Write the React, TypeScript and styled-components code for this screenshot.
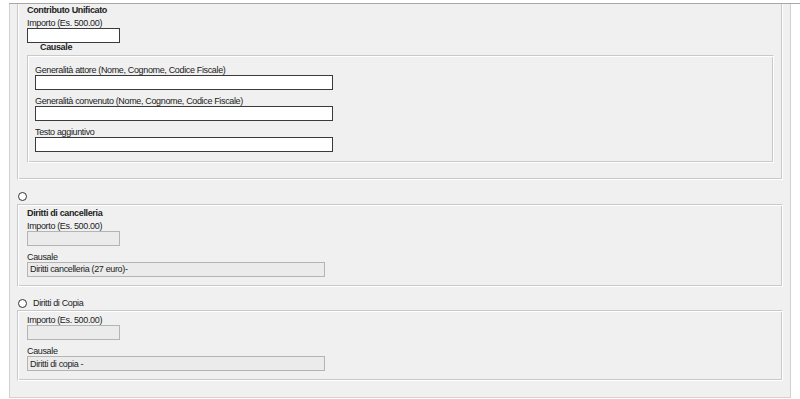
import React from 'react';
import styled, { createGlobalStyle } from 'styled-components';

const GlobalStyle = createGlobalStyle`
  html, body {
    margin: 0;
    padding: 0;
    background: #ffffff;
  }
  body {
    font-family: "Liberation Sans", Arial, sans-serif;
    font-size: 9px;
    letter-spacing: -0.35px;
    color: #222;
  }
`;

const Page = styled.div`
  width: 800px;
  height: 399px;
  overflow: hidden;
`;

const TopRule = styled.div`
  height: 3px;
  margin-left: 9px;
  border-bottom: 1px solid #a8a8a8;
`;

const Panel = styled.div`
  margin-left: 9px;
  width: 782px;
  box-sizing: border-box;
  background: #f0f0f0;
  border: 1px solid #d2d2d2;
  border-top: none;
  padding: 0 7px 16px 7px;
  display: flex;
  flex-direction: column;
`;

const Section = styled.fieldset<{ $open?: boolean; $pt?: number }>`
  margin: 0;
  min-width: 0;
  padding: ${(p) => (p.$open ? 0 : p.$pt ?? 2)}px 8px 9px 9px;
  border: 1px solid;
  border-color: #c9c9c9 #ffffff #ffffff #c9c9c9;
  box-shadow: ${(p) =>
    p.$open
      ? 'inset 1px 0 0 #fff, inset -1px -1px 0 #c9c9c9'
      : 'inset 1px 1px 0 #fff, inset -1px -1px 0 #c9c9c9'};
  ${(p) => p.$open && 'border-top: none;'}
`;

const Group = styled.fieldset`
  margin: 4px 0 7px 0;
  min-width: 0;
  padding: 9px 7px 10px 7px;
  border: 1px solid;
  border-color: #c9c9c9 #ffffff #ffffff #c9c9c9;
  box-shadow: inset 1px 1px 0 #fff, inset -1px -1px 0 #c9c9c9;
`;

const Title = styled.div`
  font-weight: bold;
  line-height: 13px;
  margin-bottom: 1px;
`;

const GroupCaption = styled.div`
  font-weight: bold;
  line-height: 8px;
  margin-left: 13px;
`;

const Field = styled.div`
  & + & {
    margin-top: 6px;
  }
`;

const Label = styled.label`
  display: block;
  line-height: 10px;
  white-space: nowrap;
`;

const TextInput = styled.input<{ $w: number }>`
  display: block;
  box-sizing: border-box;
  width: ${(p) => p.$w}px;
  height: 15px;
  margin: 0;
  padding: 0 2px;
  font: inherit;
  font-size: 9px;
  letter-spacing: -0.35px;
  color: #222;
  background: #ffffff;
  border: 1px solid #3a3a3a;
  border-radius: 0;
  outline: none;

  &:disabled {
    background: #ebebeb;
    border-color: #b4b4b4;
    color: #222;
  }
`;

const RadioRow = styled.label`
  display: flex;
  align-items: center;
  gap: 6px;
  height: 13.5px;
  margin-top: 10px;
  padding-left: 1px;
  line-height: 10px;
`;

const Radio = styled.input`
  appearance: none;
  width: 9px;
  height: 9px;
  margin: 0;
  box-sizing: border-box;
  border: 1px solid #333;
  border-radius: 50%;
  background: #fff;
`;

const App: React.FC = () => {
  return (
    <Page>
      <GlobalStyle />
      <TopRule />
      <Panel>
        <Section $open>
          <Title>Contributo Unificato</Title>
          <Field>
            <Label htmlFor="cu-importo">Importo (Es. 500.00)</Label>
            <TextInput id="cu-importo" $w={93} />
          </Field>
          <GroupCaption>Causale</GroupCaption>
          <Group>
            <Field>
              <Label htmlFor="cu-attore">Generalità attore (Nome, Cognome, Codice Fiscale)</Label>
              <TextInput id="cu-attore" $w={298} />
            </Field>
            <Field>
              <Label htmlFor="cu-convenuto">Generalità convenuto (Nome, Cognome, Codice Fiscale)</Label>
              <TextInput id="cu-convenuto" $w={298} />
            </Field>
            <Field>
              <Label htmlFor="cu-testo">Testo aggiuntivo</Label>
              <TextInput id="cu-testo" $w={298} />
            </Field>
          </Group>
        </Section>

        <RadioRow>
          <Radio type="radio" name="tipo" />
        </RadioRow>
        <Section>
          <Title>Diritti di cancelleria</Title>
          <Field>
            <Label>Importo (Es. 500.00)</Label>
            <TextInput $w={93} disabled />
          </Field>
          <Field>
            <Label>Causale</Label>
            <TextInput $w={298} disabled defaultValue="Diritti cancelleria (27 euro)-" />
          </Field>
        </Section>

        <RadioRow>
          <Radio type="radio" name="tipo" />
          Diritti di Copia
        </RadioRow>
        <Section $pt={4}>
          <Field>
            <Label>Importo (Es. 500.00)</Label>
            <TextInput $w={93} disabled />
          </Field>
          <Field>
            <Label>Causale</Label>
            <TextInput $w={298} disabled defaultValue="Diritti di copia -" />
          </Field>
        </Section>
      </Panel>
    </Page>
  );
};

export default App;
